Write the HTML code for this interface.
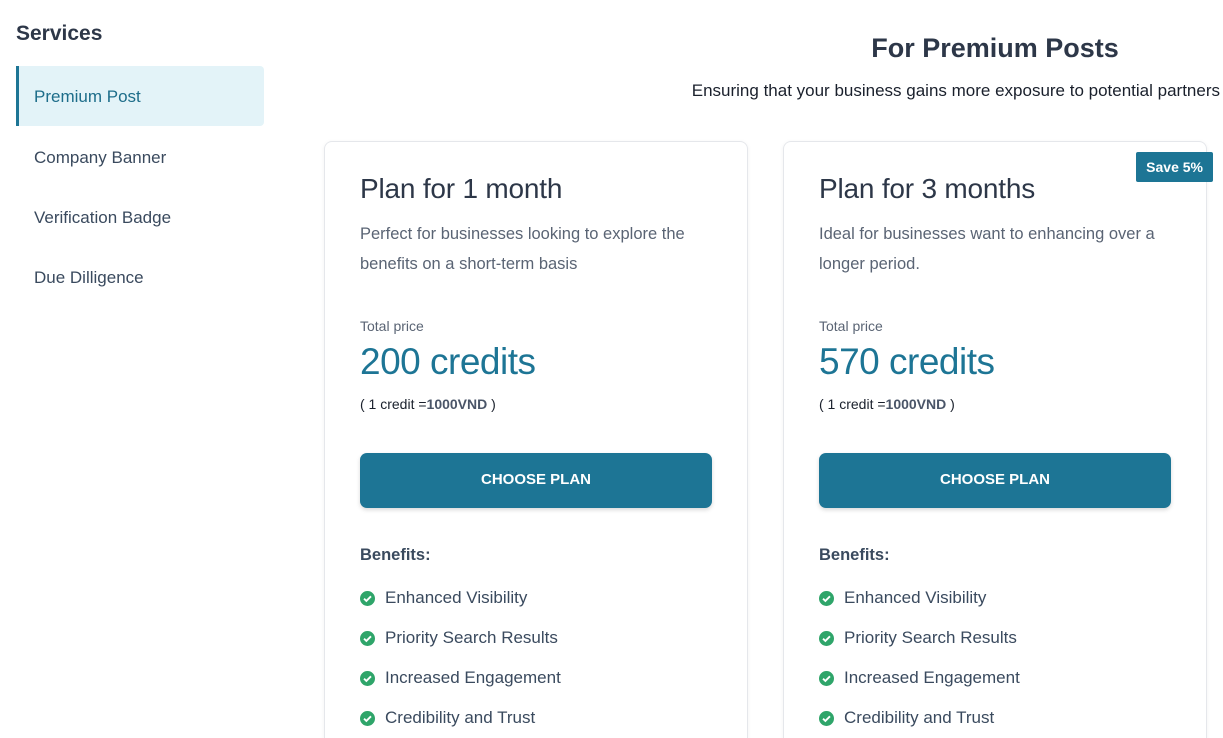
<!DOCTYPE html>
<html><head><meta charset="utf-8"><style>
*{box-sizing:border-box;margin:0;padding:0}
html,body{width:1223px;height:738px;overflow:hidden}
body{background:#fff;font-family:"Liberation Sans",sans-serif;color:#2d3748;position:relative}
.side-t{position:absolute;left:16px;top:22px;font-size:21px;font-weight:bold;color:#2d3748}
.item{position:absolute;left:16px;width:248px;height:60px;padding-left:18px;line-height:62px;font-size:17px;color:#3a4a5e}
.item.act{background:#e3f3f8;border-left:3px solid #1d7595;padding-left:15px;color:#1d6d8a;border-radius:0 4px 4px 0}
h1{position:absolute;left:780px;width:430px;text-align:center;top:33px;font-size:27px;color:#2d3748}
.sub{position:absolute;right:3px;top:81px;font-size:17px;color:#1a202c}
.card{position:absolute;top:141px;width:424px;height:597px;border:1px solid #e5e7eb;border-bottom:none;border-radius:8px 8px 0 0;box-shadow:0 1px 4px rgba(0,0,0,.06)}
.card h2{position:absolute;left:35px;top:31px;font-size:28px;font-weight:normal;color:#2d3748;letter-spacing:-.2px}
.desc{position:absolute;left:35px;top:77px;width:355px;font-size:16.5px;line-height:30px;color:#5a6474}
.tp{position:absolute;left:35px;top:176px;font-size:14px;color:#5a6474}
.price{position:absolute;left:35px;top:199px;font-size:37px;color:#1d7595;letter-spacing:-.5px}
.rate{position:absolute;left:35px;top:254px;font-size:14px;color:#1a202c}
.rate b{color:#4a5568}
.btn{position:absolute;left:35px;top:311px;width:352px;height:55px;background:#1d7595;border-radius:7px;color:#fff;font-weight:bold;font-size:15px;text-align:center;line-height:53px;box-shadow:0 2px 4px rgba(0,0,0,.15)}
.ben{position:absolute;left:35px;top:404px;font-size:16.5px;font-weight:bold;color:#3a4a5e}
ul{position:absolute;left:35px;top:446px;list-style:none}
li{height:40px;font-size:17px;color:#3a4a5e;display:flex;align-items:flex-start}
li svg{margin:3px 10px 0 0}
.save{position:absolute;right:-7px;top:10px;background:#1d7595;color:#fff;font-weight:bold;font-size:14px;padding:0 10px;height:30px;line-height:30px;border-radius:2px}
</style></head><body>
<div class="side-t">Services</div>
<div class="item act" style="top:66px">Premium Post</div>
<div class="item" style="top:127px">Company Banner</div>
<div class="item" style="top:187px">Verification Badge</div>
<div class="item" style="top:247px">Due Dilligence</div>
<h1>For Premium Posts</h1>
<div class="sub">Ensuring that your business gains more exposure to potential partners</div>

<div class="card" style="left:324px">
<h2>Plan for 1 month</h2>
<div class="desc">Perfect for businesses looking to explore the benefits on a short-term basis</div>
<div class="tp">Total price</div>
<div class="price">200 credits</div>
<div class="rate">( 1 credit =<b>1000VND</b> )</div>
<div class="btn">CHOOSE PLAN</div>
<div class="ben">Benefits:</div>
<ul>
<li><svg width="15" height="15" viewBox="0 0 16 16"><circle cx="8" cy="8" r="8" fill="#2fa56a"/><path d="M4.3 8.2l2.5 2.4 4.9-4.9" stroke="#fff" stroke-width="2" fill="none"/></svg>Enhanced Visibility</li>
<li><svg width="15" height="15" viewBox="0 0 16 16"><circle cx="8" cy="8" r="8" fill="#2fa56a"/><path d="M4.3 8.2l2.5 2.4 4.9-4.9" stroke="#fff" stroke-width="2" fill="none"/></svg>Priority Search Results</li>
<li><svg width="15" height="15" viewBox="0 0 16 16"><circle cx="8" cy="8" r="8" fill="#2fa56a"/><path d="M4.3 8.2l2.5 2.4 4.9-4.9" stroke="#fff" stroke-width="2" fill="none"/></svg>Increased Engagement</li>
<li><svg width="15" height="15" viewBox="0 0 16 16"><circle cx="8" cy="8" r="8" fill="#2fa56a"/><path d="M4.3 8.2l2.5 2.4 4.9-4.9" stroke="#fff" stroke-width="2" fill="none"/></svg>Credibility and Trust</li>
</ul>
</div>

<div class="card" style="left:783px">
<div class="save">Save 5%</div>
<h2>Plan for 3 months</h2>
<div class="desc">Ideal for businesses want to enhancing over a longer period.</div>
<div class="tp">Total price</div>
<div class="price">570 credits</div>
<div class="rate">( 1 credit =<b>1000VND</b> )</div>
<div class="btn">CHOOSE PLAN</div>
<div class="ben">Benefits:</div>
<ul>
<li><svg width="15" height="15" viewBox="0 0 16 16"><circle cx="8" cy="8" r="8" fill="#2fa56a"/><path d="M4.3 8.2l2.5 2.4 4.9-4.9" stroke="#fff" stroke-width="2" fill="none"/></svg>Enhanced Visibility</li>
<li><svg width="15" height="15" viewBox="0 0 16 16"><circle cx="8" cy="8" r="8" fill="#2fa56a"/><path d="M4.3 8.2l2.5 2.4 4.9-4.9" stroke="#fff" stroke-width="2" fill="none"/></svg>Priority Search Results</li>
<li><svg width="15" height="15" viewBox="0 0 16 16"><circle cx="8" cy="8" r="8" fill="#2fa56a"/><path d="M4.3 8.2l2.5 2.4 4.9-4.9" stroke="#fff" stroke-width="2" fill="none"/></svg>Increased Engagement</li>
<li><svg width="15" height="15" viewBox="0 0 16 16"><circle cx="8" cy="8" r="8" fill="#2fa56a"/><path d="M4.3 8.2l2.5 2.4 4.9-4.9" stroke="#fff" stroke-width="2" fill="none"/></svg>Credibility and Trust</li>
</ul>
</div>
</body></html>
